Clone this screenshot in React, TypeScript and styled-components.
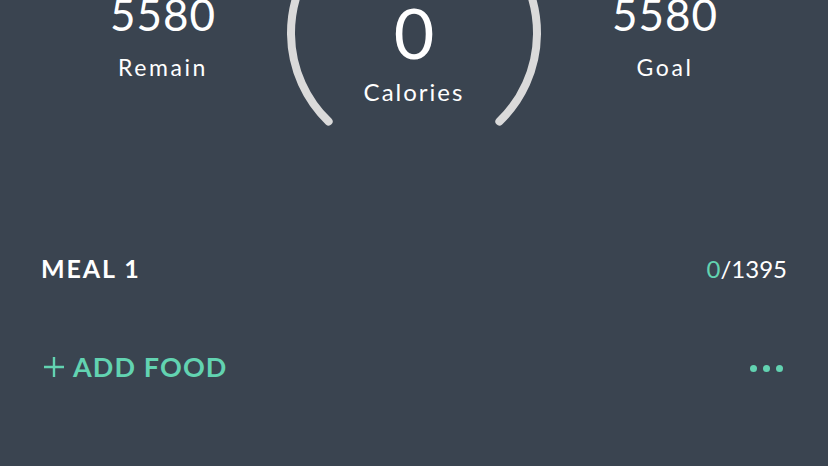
import styled, { createGlobalStyle } from "styled-components";

const GlobalStyle = createGlobalStyle`
    html, body {
        margin: 0;
        padding: 0;
        background-color: #3a4450;
        font-family: Lato, "Open Sans", sans-serif;
        color: #ffffff;
        overflow: hidden;
    }
`;

const Wrapper = styled.div`
    width: 828px;
    height: 466px;
    overflow: hidden;
    background-color: #3a4450;
`;

const Summary = styled.div`
    display: grid;
    grid-template-columns: 240px 262px 240px;
    justify-content: center;
    align-items: start;
    margin-top: -98px;
`;

const Stat = styled.div`
    display: flex;
    flex-direction: column;
    align-items: center;
    padding-top: 90px;
`;

const StatValue = styled.div`
    font-size: 44px;
    line-height: 44px;
    letter-spacing: 1px;
`;

const StatLabel = styled.div`
    margin-top: 17px;
    font-size: 23px;
    line-height: 28px;
    letter-spacing: 2.6px;
`;

const Ring = styled.div`
    position: relative;
    width: 262px;
    height: 262px;
    display: flex;
    flex-direction: column;
    align-items: center;
    padding-top: 95px;
    box-sizing: border-box;

    svg {
        position: absolute;
        inset: 0;
    }
`;

const RingValue = styled.div`
    position: relative;
    font-size: 70px;
    line-height: 70px;
`;

const RingLabel = styled.div`
    position: relative;
    margin-top: 10px;
    font-size: 24px;
    line-height: 30px;
    letter-spacing: 2px;
`;

const Meal = styled.div`
    padding: 0 41px;
    margin-top: 89px;
`;

const MealHeader = styled.div`
    display: flex;
    justify-content: space-between;
    align-items: baseline;
`;

const MealTitle = styled.div`
    font-size: 25px;
    font-weight: 700;
    letter-spacing: 1.9px;
`;

const MealCount = styled.div`
    font-size: 24px;
`;

const Eaten = styled.span`
    color: #62d3b1;
`;

const AddRow = styled.div`
    display: flex;
    justify-content: space-between;
    align-items: center;
    margin-top: 67px;
`;

const AddButton = styled.div`
    display: flex;
    align-items: center;
    gap: 8px;
    padding-left: 2px;
    color: #62d3b1;
    font-size: 27px;
    font-weight: 700;
    letter-spacing: 1.1px;
`;

const Dots = styled.div`
    display: flex;
    gap: 6px;
    padding-right: 4px;
    padding-top: 3px;
`;

const Dot = styled.span`
    width: 7px;
    height: 7px;
    border-radius: 50%;
    background-color: #62d3b1;
`;

function App() {
    return (
        <Wrapper>
            <GlobalStyle />
            <Summary>
                <Stat>
                    <StatValue>5580</StatValue>
                    <StatLabel>Remain</StatLabel>
                </Stat>
                <Ring>
                    <svg width="262" height="262" viewBox="0 0 262 262">
                        <path
                            d="M 45.6 219.5 A 123 123 0 1 1 216.4 219.5"
                            fill="none"
                            stroke="#dadada"
                            strokeWidth="8"
                            strokeLinecap="round"
                        />
                    </svg>
                    <RingValue>0</RingValue>
                    <RingLabel>Calories</RingLabel>
                </Ring>
                <Stat>
                    <StatValue>5580</StatValue>
                    <StatLabel>Goal</StatLabel>
                </Stat>
            </Summary>
            <Meal>
                <MealHeader>
                    <MealTitle>MEAL 1</MealTitle>
                    <MealCount>
                        <Eaten>0</Eaten>/1395
                    </MealCount>
                </MealHeader>
                <AddRow>
                    <AddButton>
                        <svg width="22" height="22" viewBox="0 0 22 22">
                            <path
                                d="M11 1 V21 M1 11 H21"
                                stroke="#62d3b1"
                                strokeWidth="2.4"
                            />
                        </svg>
                        ADD FOOD
                    </AddButton>
                    <Dots>
                        <Dot />
                        <Dot />
                        <Dot />
                    </Dots>
                </AddRow>
            </Meal>
        </Wrapper>
    );
}

export default App;
